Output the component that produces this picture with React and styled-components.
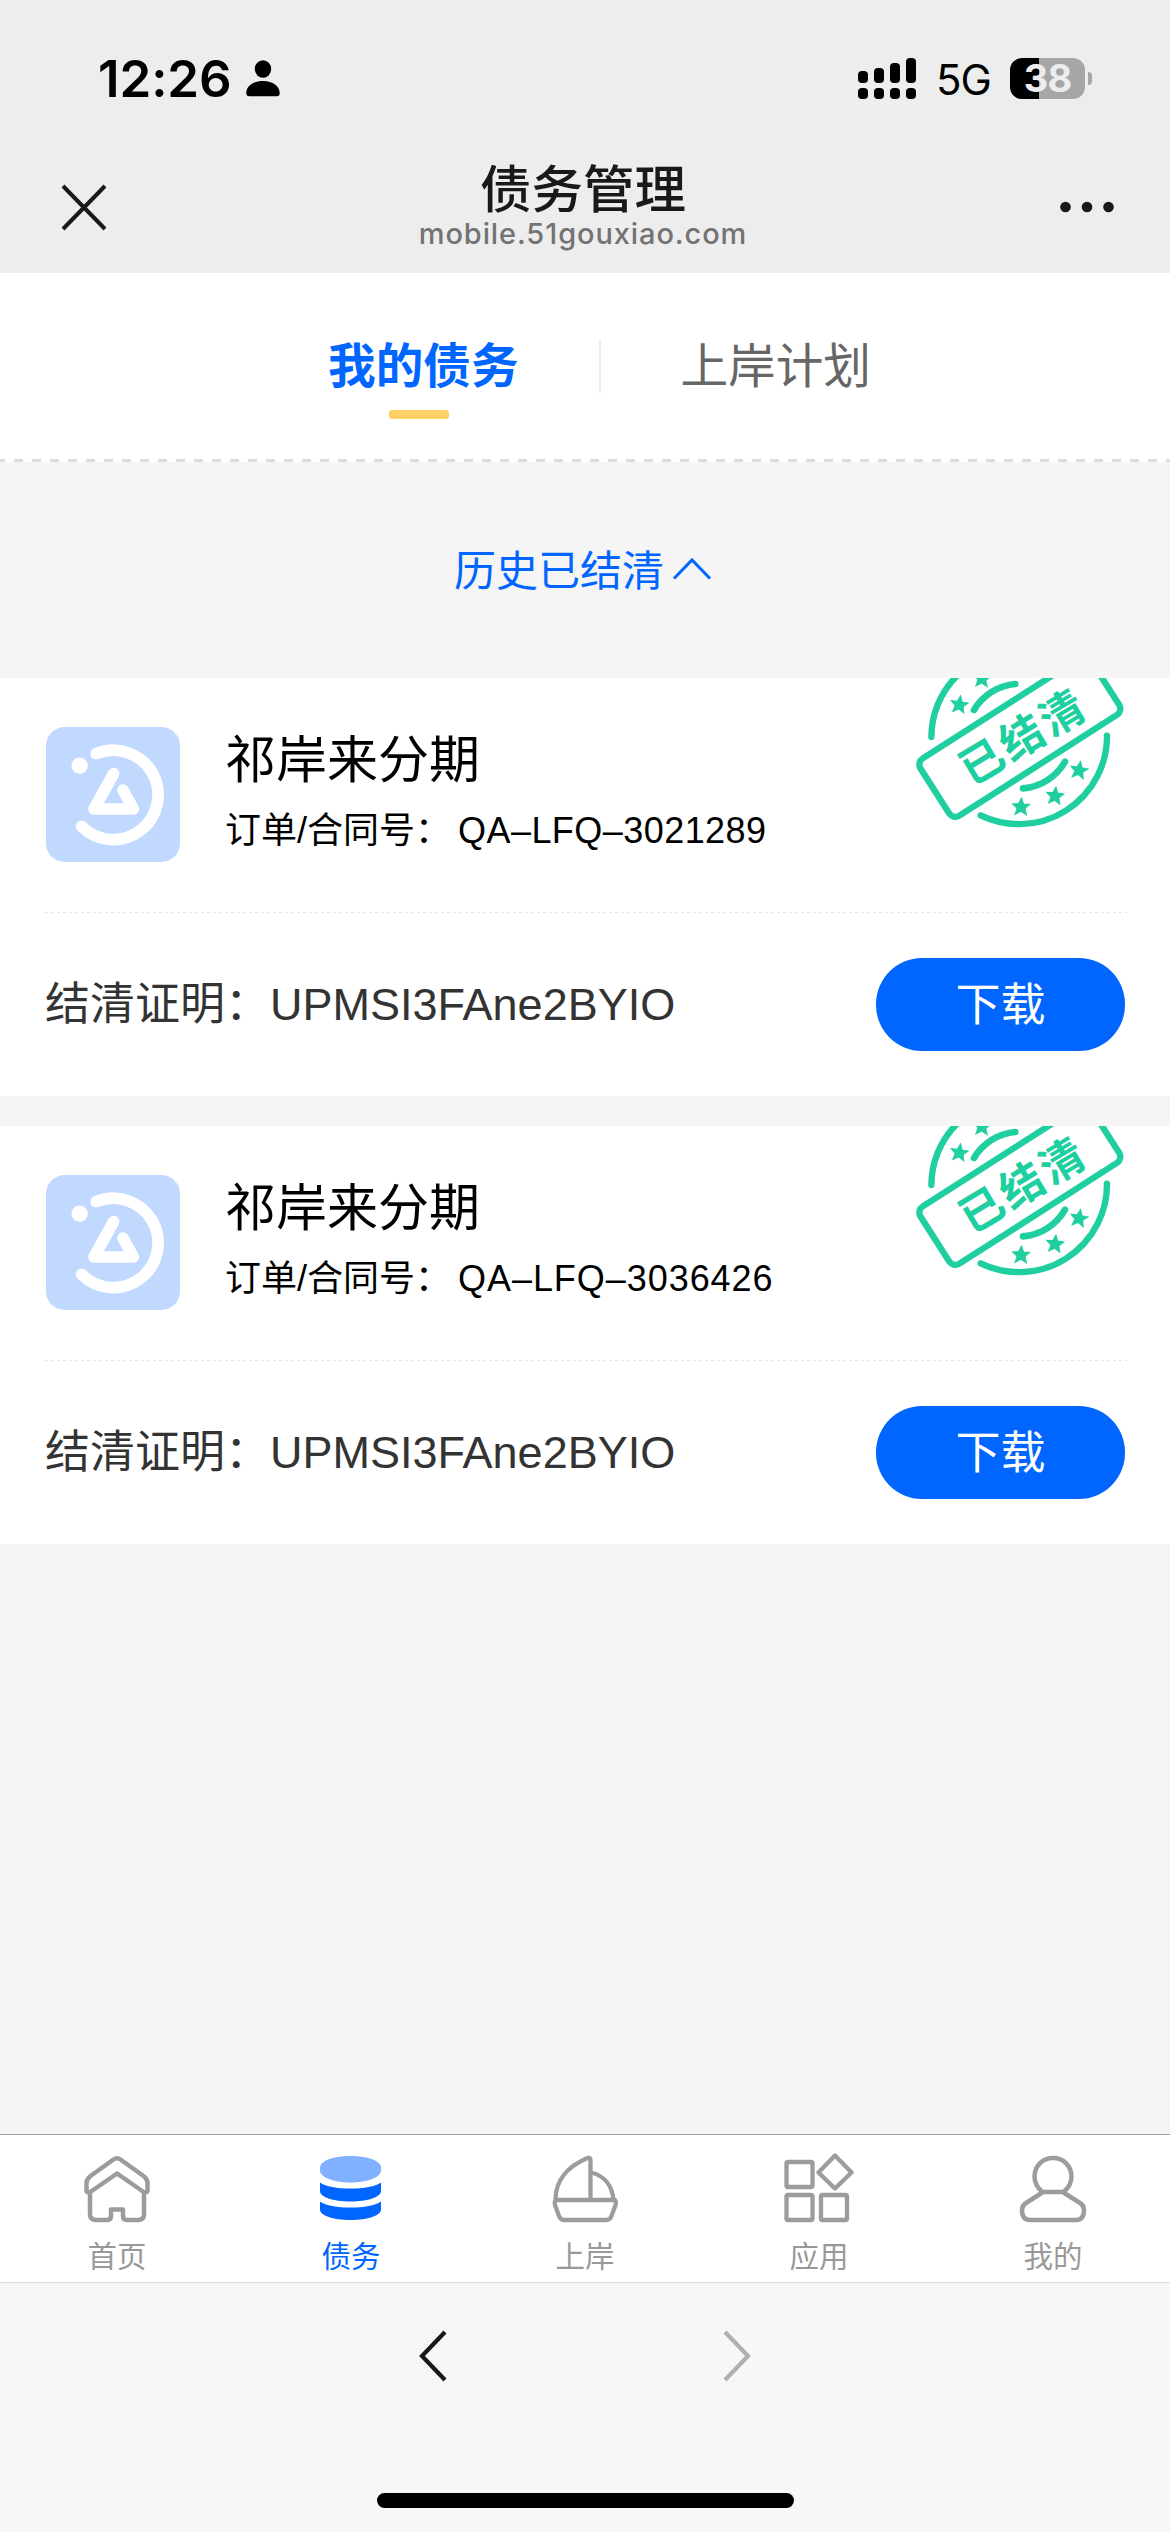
import React, { useState } from "react";
import styled, { createGlobalStyle } from "styled-components";

const loans = [
  {
    name: "祁岸来分期",
    orderNo: "QA–LFQ–3021289",
    proof: "UPMSI3FAne2BYIO",
    tracking: 0.45,
  },
  {
    name: "祁岸来分期",
    orderNo: "QA–LFQ–3036426",
    proof: "UPMSI3FAne2BYIO",
    tracking: 0.95,
  },
];

const STAR = "M0-27 7.5-9.5 26-8.5 12 4 17 23 0 13-17 23-12 4-26-8.5-7.5-9.5Z";

const stars = [
  { x: 239, y: 134, r: 8 },
  { x: 307, y: 56, r: 4 },
  { x: 424, y: 441, r: 2 },
  { x: 526, y: 408, r: 6 },
  { x: 598, y: 331, r: 10 },
];

const SignalIcon = () => (
  <svg width="58" height="41" viewBox="0 0 58 41">
    {[13, 10, 5, 0].map((top, i) => (
      <g key={top}>
        <rect x={i * 16} y={top} width="10" height={25 - top} rx="4" />
        <rect x={i * 16} y="30" width="10" height="11" rx="4" />
      </g>
    ))}
  </svg>
);

const UserGlyph = () => (
  <svg width="34" height="37" viewBox="0 0 34 37">
    <ellipse cx="17" cy="9" rx="8.2" ry="8.8" />
    <path d="M0.3 33C0.3 26 7 21 17 21s16.700 5 16.700 12c0 2.200-1 3.200-3 3.200H3.300c-2 0-3-1-3-3.200Z" />
  </svg>
);

const LoanLogo = () => (
  <svg width="134" height="135" viewBox="140 174 402 405">
    <rect x="140" y="174" width="402" height="405" rx="56" fill="#c2d9ff" />
    <circle cx="241" cy="290" r="24.500" fill="#fff" />
    <g
      fill="none"
      stroke="#fff"
      strokeWidth="35"
      strokeLinecap="round"
      strokeLinejoin="round"
    >
      <path d="M291 254A134 134 0 1 1 247 472" />
      <path d="M343 314 284 420H402L371 363" />
    </g>
  </svg>
);

const SettledStamp = () => (
  <svg width="214" height="154" viewBox="100 54 642 462">
    <g fill="none" stroke="#20cfa0" strokeLinecap="round">
      <g strokeWidth="19">
        <path d="M155 231A265 262 0 0 1 419-30" />
        <path d="M682 227A264 264 0 0 1 303 466" />
        <rect
          x="118"
          y="128"
          width="605"
          height="204"
          rx="22"
          transform="rotate(-32.600 420.500 230)"
        />
      </g>
      <g strokeWidth="20">
        <path d="M283 150A160 160 0 0 1 407 72" />
        <path d="M430 385A158 158 0 0 0 556 305" />
      </g>
    </g>
    {stars.map((s) => (
      <path
        key={s.x}
        d={STAR}
        fill="#20cfa0"
        stroke="#20cfa0"
        strokeWidth="3"
        transform={`translate(${s.x} ${s.y}) rotate(${s.r})`}
      />
    ))}
    <StampText
      x="431"
      y="279"
      textAnchor="middle"
      transform="rotate(-31 427 232)"
    >
      已结清
    </StampText>
  </svg>
);

const HomeIcon = () => (
  <svg width="68" height="70" viewBox="83 2153 68 70">
    <g fill="none" stroke="#9c9c9c" strokeWidth="4.500" strokeLinejoin="round">
      <path d="M86.500 2191v-8q0-4 4-7l23-16.500q3.500-2.500 7 0l23 16.500q4 3 4 7v8q-1.500 2.500-4.500.5L117 2173.500 91 2191.500q-3 2-4.500-.5Z" />
      <path d="M90 2192v22q0 6 6 6h11q4 0 4-4v-6.500h12v6.500q0 4 4 4h11q6 0 6-6v-22" />
    </g>
  </svg>
);

const DebtIcon = () => (
  <svg width="68" height="70" viewBox="317 2153 68 70">
    <path
      d="M320 2167.500C320 2161 333 2156 350.500 2156S381 2161 381 2167.500v3C381 2177 368 2182.500 350.500 2182.500S320 2177 320 2170.500Z"
      fill="#80b0ff"
    />
    <path
      d="M320 2182.500c6 4 17 6 30.500 6s24.500-2 30.500-6v8.500c0 6-13 10.500-30.500 10.500S320 2197 320 2191Z"
      fill="#0066ff"
    />
    <path
      d="M320 2201.500c6 4 17 6 30.500 6s24.500-2 30.500-6v8c0 6-13 10.500-30.500 10.500S320 2215.500 320 2209.500Z"
      fill="#0066ff"
    />
  </svg>
);

const ShipIcon = () => (
  <svg width="68" height="70" viewBox="551 2153 68 70">
    <g fill="none" stroke="#9c9c9c" strokeWidth="4.300" strokeLinejoin="round">
      <path d="M590.500 2199.500V2160q0-3-3-2c-19 8-32 22-32 41.500" />
      <path d="M591 2172.500c13 3 21 13 22.500 27" />
      <path d="M556 2200h59q1.500 2 .5 5l-4 11q-1.500 4-5 4h-42.500q-3.500 0-5-4l-4-11q-1-3 1-5Z" />
    </g>
  </svg>
);

const AppsIcon = () => (
  <svg width="72" height="70" viewBox="783 2152 72 70">
    <g fill="none" stroke="#9c9c9c" strokeWidth="4.300" strokeLinejoin="round">
      <rect x="786.500" y="2161" width="26" height="25" rx="1.500" />
      <rect x="786.500" y="2194" width="26" height="25" rx="1.500" />
      <rect x="821" y="2194" width="26" height="25" rx="1.500" />
      <path d="M835 2154.500 851.500 2171.500 835 2187.500 818.500 2171.500Z" />
    </g>
  </svg>
);

const MineIcon = () => (
  <svg width="68" height="70" viewBox="1019 2153 68 70">
    <g fill="none" stroke="#9c9c9c" strokeWidth="4.500" strokeLinejoin="round">
      <path d="M1042.500 2192c-5-4-8-9.500-8-15.500 0-10.500 8-18.500 18.500-18.500s18.500 8 18.500 18.500c0 6-3 11.500-8 15.500Z" />
      <path d="M1042.500 2192.500 1026 2203q-4 2.500-4 7 0 10 8 10h46q8 0 8-10 0-4.500-4-7l-16.500-10.500" />
    </g>
  </svg>
);

const navItems = [
  { key: "home", label: "首页", Icon: HomeIcon },
  { key: "debt", label: "债务", Icon: DebtIcon },
  { key: "ashore", label: "上岸", Icon: ShipIcon },
  { key: "apps", label: "应用", Icon: AppsIcon },
  { key: "mine", label: "我的", Icon: MineIcon },
];

const LoanCard = ({ loan }) => (
  <Card>
    <Stamp>
      <SettledStamp />
    </Stamp>
    <CardTop>
      <LoanLogo />
      <LoanInfo>
        <LoanName>{loan.name}</LoanName>
        <OrderNo>
          订单/合同号：
          <OrderValue $tracking={loan.tracking}>{loan.orderNo}</OrderValue>
        </OrderNo>
      </LoanInfo>
    </CardTop>
    <CardBottom>
      <Proof>结清证明：{loan.proof}</Proof>
      <DownloadButton>下载</DownloadButton>
    </CardBottom>
  </Card>
);

const App = () => {
  const [tab, setTab] = useState("mine");
  const [showHistory, setShowHistory] = useState(true);

  return (
    <Page>
      <GlobalStyle />
      <StatusBar>
        <Clock>12:26</Clock>
        <UserGlyph />
        <StatusRight>
          <SignalIcon />
          <Network>5G</Network>
          <Battery>38</Battery>
          <BatteryNub />
        </StatusRight>
      </StatusBar>

      <TitleBar>
        <svg width="46" height="47" viewBox="0 0 46 47">
          <path d="M2 2 44 45M44 2 2 45" stroke="#191919" strokeWidth="4" />
        </svg>
        <TitleText>
          <Title>债务管理</Title>
          <Domain>mobile.51gouxiao.com</Domain>
        </TitleText>
        <svg width="54" height="12" viewBox="0 0 54 12" fill="#191919">
          <circle cx="5.500" cy="6" r="5.300" />
          <circle cx="27" cy="6" r="5.300" />
          <circle cx="48.500" cy="6" r="5.300" />
        </svg>
      </TitleBar>

      <Tabs>
        <Tab $active={tab === "mine"} onClick={() => setTab("mine")}>
          我的债务
        </Tab>
        <TabDivider />
        <Tab $active={tab === "plan"} onClick={() => setTab("plan")}>
          上岸计划
        </Tab>
      </Tabs>
      <DashedLine />

      <Content>
        <HistoryToggle onClick={() => setShowHistory((prev) => !prev)}>
          历史已结清
          <svg width="40" height="24" viewBox="0 0 40 24">
            <path
              d="M2 21.500 20 3 38 21.500"
              fill="none"
              stroke="#0066ff"
              strokeWidth="3"
            />
          </svg>
        </HistoryToggle>
        {showHistory && (
          <CardList>
            {loans.map((loan) => (
              <LoanCard key={loan.orderNo} loan={loan} />
            ))}
          </CardList>
        )}
      </Content>

      <BottomNav>
        {navItems.map(({ key, label, Icon }) => (
          <NavItem key={key} $active={key === "debt"}>
            <Icon />
            {label}
          </NavItem>
        ))}
      </BottomNav>

      <BrowserBar>
        <svg width="30" height="54" viewBox="0 0 30 54">
          <path
            d="M27 3 4 27 27 51"
            fill="none"
            stroke="#191919"
            strokeWidth="4.200"
          />
        </svg>
        <svg width="30" height="54" viewBox="0 0 30 54">
          <path
            d="M3 3 26 27 3 51"
            fill="none"
            stroke="#b0b0b0"
            strokeWidth="4.200"
          />
        </svg>
      </BrowserBar>
      <HomeIndicator />
    </Page>
  );
};

const GlobalStyle = createGlobalStyle`
  * {
    box-sizing: border-box;
  }

  body {
    margin: 0;
    font-family: "Liberation Sans", "Noto Sans CJK SC", sans-serif;
  }

  svg {
    display: block;
    flex-shrink: 0;
  }
`;

const Page = styled.div`
  display: flex;
  flex-direction: column;
  width: 1170px;
  height: 2532px;
  overflow: hidden;
  background: #f7f7f7;
`;

const StatusBar = styled.div`
  display: flex;
  align-items: center;
  flex-shrink: 0;
  height: 141px;
  padding: 15px 78px 0 98px;
  background: #ededed;
`;

const Clock = styled.div`
  width: 148px;
  font-family: Inter, sans-serif;
  font-size: 51px;
  font-weight: 600;
  letter-spacing: -0.1px;
`;

const StatusRight = styled.div`
  display: flex;
  align-items: center;
  margin-left: auto;
`;

const Network = styled.div`
  width: 53px;
  margin: 2px 21px 0 20px;
  font-family: Inter, sans-serif;
  font-size: 42px;
  letter-spacing: -1px;
`;

const Battery = styled.div`
  width: 75px;
  height: 41px;
  border-radius: 12px;
  background: linear-gradient(90deg, #000 29px, #a6a6a6 29px);
  color: #ededed;
  font-family: Inter, sans-serif;
  font-size: 38px;
  font-weight: 700;
  line-height: 41px;
  text-align: center;
  letter-spacing: -1px;
`;

const BatteryNub = styled.div`
  width: 4px;
  height: 13px;
  margin-left: 3px;
  border-radius: 0 4px 4px 0;
  background: #a6a6a6;
`;

const TitleBar = styled.div`
  display: flex;
  align-items: center;
  justify-content: space-between;
  flex-shrink: 0;
  height: 132px;
  padding: 0 56px 0 61px;
  background: #ededed;
`;

const TitleText = styled.div`
  margin-right: 1px;
  padding-bottom: 2px;
  text-align: center;
`;

const Title = styled.div`
  color: #191919;
  font-family: "Noto Sans CJK SC", sans-serif;
  font-size: 51.500px;
  font-weight: 500;
  line-height: 56px;
`;

const Domain = styled.div`
  color: #737373;
  font-family: Inter, sans-serif;
  font-size: 29px;
  font-weight: 500;
  line-height: 40px;
  letter-spacing: 0.9px;
`;

const Tabs = styled.div`
  display: flex;
  justify-content: center;
  flex-shrink: 0;
  height: 186px;
  padding: 66px 0 0 29px;
  background: #fff;
`;

const Tab = styled.div`
  display: flex;
  flex-direction: column;
  align-items: center;
  color: ${({ $active }) => ($active ? "#0066ff" : "#666")};
  font-size: 47.600px;
  font-weight: ${({ $active }) => ($active ? 700 : 400)};
  line-height: 56px;

  &::after {
    content: "";
    width: 60px;
    height: 9px;
    margin: 15px 9px 0 0;
    border-radius: 3px;
    background: ${({ $active }) => ($active ? "#ffd066" : "transparent")};
  }
`;

const TabDivider = styled.div`
  width: 2px;
  height: 54px;
  margin: 0 80px;
  background: #ebebeb;
`;

const DashedLine = styled.div`
  flex-shrink: 0;
  height: 3px;
  background: repeating-linear-gradient(
    90deg,
    #dcdcdc 0 5px,
    #fff 5px 14px,
    #dcdcdc 14px 18px
  );
`;

const Content = styled.div`
  flex: 1;
  min-height: 0;
  background: #f5f5f5;
`;

const HistoryToggle = styled.div`
  display: flex;
  align-items: center;
  justify-content: center;
  gap: 8px;
  height: 216px;
  padding: 0 4px 6px 0;
  color: #0066ff;
  font-size: 42px;

  svg {
    margin-top: 4px;
  }
`;

const CardList = styled.div`
  display: flex;
  flex-direction: column;
  gap: 30px;
`;

const Card = styled.div`
  position: relative;
  height: 418px;
  overflow: hidden;
  background: #fff;
`;

const Stamp = styled.div`
  position: absolute;
  top: 0;
  right: 43px;
`;

const StampText = styled.text`
  fill: #20cfa0;
  font-family: "Noto Sans CJK SC", sans-serif;
  font-size: 131px;
  font-weight: 700;
  letter-spacing: 9px;
`;

const CardTop = styled.div`
  display: flex;
  gap: 45px;
  height: 235px;
  margin: 0 43px 0 45px;
  padding: 49px 0 0 1px;
  background: repeating-linear-gradient(90deg, #e6e6e6 0 3px, #fff 3px 6px)
    bottom / 100% 1px no-repeat;
`;

const LoanInfo = styled.div`
  padding-top: 4px;
`;

const LoanName = styled.div`
  color: #000;
  font-size: 51px;
  line-height: 60px;
`;

const OrderNo = styled.div`
  margin-top: 15px;
  color: #000;
  font-size: 36px;
  line-height: 50px;
`;

const OrderValue = styled.span`
  margin-left: 7px;
  letter-spacing: ${({ $tracking }) => $tracking}px;
`;

const CardBottom = styled.div`
  display: flex;
  align-items: center;
  justify-content: space-between;
  height: 183px;
  padding: 0 45px;
`;

const Proof = styled.div`
  padding-bottom: 9px;
  color: #333;
  font-size: 45px;
`;

const DownloadButton = styled.button`
  width: 249px;
  height: 93px;
  padding: 0 0 6px;
  border: 0;
  border-radius: 46px;
  background: #0066ff;
  color: #fff;
  font-family: "Noto Sans CJK SC", sans-serif;
  font-size: 45px;
`;

const BottomNav = styled.div`
  display: grid;
  grid-template-columns: repeat(5, 1fr);
  flex-shrink: 0;
  height: 149px;
  border-top: 1px solid #a3a3a3;
  border-bottom: 1px solid #dedede;
  background: #fff;
`;

const NavItem = styled.div`
  display: flex;
  flex-direction: column;
  align-items: center;
  gap: 16px;
  padding-top: 18px;
  color: ${({ $active }) => ($active ? "#0066ff" : "#999")};
  font-size: 29.500px;
  line-height: 36px;
`;

const BrowserBar = styled.div`
  display: flex;
  justify-content: center;
  flex-shrink: 0;
  gap: 274px;
  height: 210px;
  padding-top: 46px;
`;

const HomeIndicator = styled.div`
  flex-shrink: 0;
  width: 417px;
  height: 15px;
  margin: 0 auto 24px;
  border-radius: 8px;
  background: #000;
`;

export default App;
